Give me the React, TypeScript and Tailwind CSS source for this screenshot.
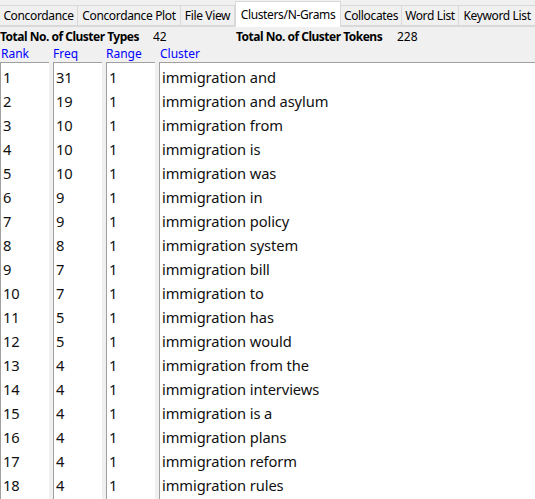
import React from "react";

const rows: [number, number, number, string][] = [
  [1, 31, 1, "immigration and"],
  [2, 19, 1, "immigration and asylum"],
  [3, 10, 1, "immigration from"],
  [4, 10, 1, "immigration is"],
  [5, 10, 1, "immigration was"],
  [6, 9, 1, "immigration in"],
  [7, 9, 1, "immigration policy"],
  [8, 8, 1, "immigration system"],
  [9, 7, 1, "immigration bill"],
  [10, 7, 1, "immigration to"],
  [11, 5, 1, "immigration has"],
  [12, 5, 1, "immigration would"],
  [13, 4, 1, "immigration from the"],
  [14, 4, 1, "immigration interviews"],
  [15, 4, 1, "immigration is a"],
  [16, 4, 1, "immigration plans"],
  [17, 4, 1, "immigration reform"],
  [18, 4, 1, "immigration rules"],
];

const tabs: { label: string; w: string }[] = [
  { label: "Concordance", w: "w-[78px]" },
  { label: "Concordance Plot", w: "w-[103px]" },
  { label: "File View", w: "w-[54px]" },
  { label: "Clusters/N-Grams", w: "w-[106px]" },
  { label: "Collocates", w: "w-[61px]" },
  { label: "Word List", w: "w-[57px]" },
  { label: "Keyword List", w: "w-[77px]" },
];

function Column({ values, w, grow }: { values: (string | number)[]; w?: string; grow?: boolean }) {
  return (
    <div
      className={`${grow ? "flex-1" : w} bg-white border-t border-l border-[#a0a0a0] overflow-hidden pt-[2px]`}
    >
      {values.map((v, i) => (
        <div
          key={i}
          className="h-[24px] leading-[24px] pl-[2px] text-[14.7px] text-[#101010] whitespace-nowrap tracking-[-0.1px]"
        >
          {v}
        </div>
      ))}
    </div>
  );
}

export default function App() {
  return (
    <div
      className="w-[535px] h-[499px] bg-[#f0f0f0] overflow-hidden flex flex-col"
      style={{ fontFamily: '"Noto Sans", "Open Sans", sans-serif' }}
    >
      <div className="flex items-end h-[27px] border-b border-[#d9d9d9]">
        {tabs.map((t) => {
          const active = t.label === "Clusters/N-Grams";
          return (
            <div
              key={t.label}
              className={
                active
                  ? `${t.w} shrink-0 h-[26px] bg-white border border-b-0 border-[#d9d9d9] text-center whitespace-nowrap overflow-hidden text-[12px] tracking-[-0.35px] leading-[26px] text-black -mb-px`
                  : `${t.w} shrink-0 h-[21px] bg-[#f0f0f0] border-y border-r border-[#d9d9d9] text-center whitespace-nowrap overflow-hidden text-[12px] tracking-[-0.35px] leading-[20px] text-black`
              }
            >
              {t.label}
            </div>
          );
        })}
      </div>
      <div className="flex items-center h-[17px] text-[12px] mt-[1px] whitespace-nowrap">
        <span className="font-bold w-[153px] shrink-0 tracking-[-0.5px]">Total No. of Cluster Types</span>
        <span className="w-[83px] shrink-0">42</span>
        <span className="font-bold w-[161px] shrink-0 tracking-[-0.5px]">Total No. of Cluster Tokens</span>
        <span>228</span>
      </div>
      <div className="flex text-[12px] text-[#0000ff] h-[17px] leading-[17px] whitespace-nowrap">
        <span className="w-[53px] pl-[1px]">Rank</span>
        <span className="w-[53px]">Freq</span>
        <span className="w-[53px]">Range</span>
        <span className="pl-[1px]">Cluster</span>
      </div>
      <div className="flex flex-1 gap-[4px] min-h-0">
        <Column w="w-[49px]" values={rows.map((r) => r[0])} />
        <Column w="w-[49px]" values={rows.map((r) => r[1])} />
        <Column w="w-[49px]" values={rows.map((r) => r[2])} />
        <Column grow values={rows.map((r) => r[3])} />
      </div>
    </div>
  );
}
